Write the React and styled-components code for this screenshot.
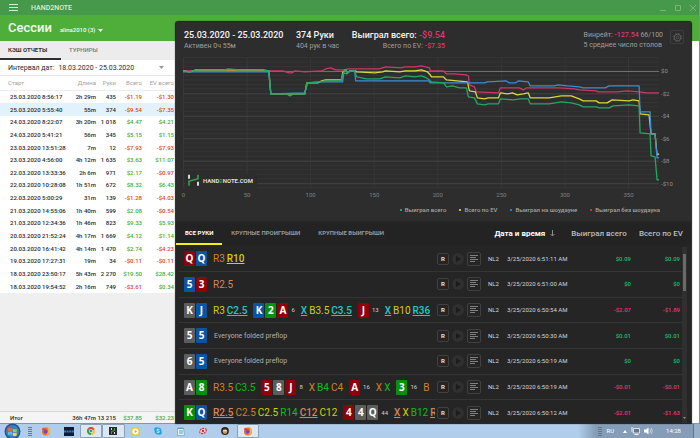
import React, { useState } from 'react';
import styled, { createGlobalStyle, css } from 'styled-components';

const GlobalStyle = createGlobalStyle`
  * {
    box-sizing: border-box;
  }

  body {
    margin: 0;
    font-family: Roboto, 'Noto Sans', sans-serif;
    font-size: 6px;
    line-height: 8px;
    color: #2b2b2b;
  }

  button,
  select {
    margin: 0;
    padding: 0;
    border: none;
    background: none;
    color: inherit;
    font: inherit;
    white-space: nowrap;
  }

  h1,
  p {
    margin: 0;
  }
`;

const Desktop = styled.div`
  display: flex;
  flex-direction: column;
  height: 100vh;
  overflow: hidden;
`;

const AppWindow = styled.main`
  position: relative;
  flex: 1;
  min-height: 0;
  display: flex;
  flex-direction: column;
  background: #ffffff;
  border-right: 1px solid #8c8c8c;
`;

const TitleBar = styled.header`
  display: flex;
  align-items: center;
  height: 15px;
  padding: 0 2px 0 9px;
  gap: 12px;
  background: #46994b;
  color: #d9efd6;
  font-size: 7px;
  font-weight: 500;
`;

const IconButton = styled.button`
  display: flex;
  align-items: center;
  justify-content: center;
`;

const WindowButtons = styled.div`
  display: flex;
  gap: 7px;
  margin-left: auto;
  color: #79b577;
`;

const PageHeader = styled.div`
  display: flex;
  align-items: center;
  gap: 8px;
  height: 26px;
  padding-left: 8px;
  background: #4fae39;
  color: #f2fbef;
`;

const PageTitle = styled.h1`
  font-size: 13px;
  line-height: 16px;
  font-weight: 500;
`;

const PlayerButton = styled.button`
  display: flex;
  align-items: center;
  gap: 3px;
  padding-top: 4px;
  font-weight: 500;
`;

const Sidebar = styled.section`
  flex: 1;
  min-height: 0;
  display: flex;
  flex-direction: column;
  width: 175px;
  background: #efefef;
`;

const ReportTabs = styled.nav`
  display: flex;
  flex: none;
  height: 19px;
  background: #ececec;
`;

const ReportTab = styled.button`
  width: 61px;
  padding-left: 8px;
  border-bottom: 2px solid ${props => (props.$active ? '#2e2e33' : 'transparent')};
  color: ${props => (props.$active ? '#333333' : '#7b7b7b')};
  font-weight: ${props => (props.$active ? 700 : 500)};
  text-align: left;
`;

const RangeRow = styled.div`
  display: flex;
  align-items: center;
  flex: none;
  height: 16px;
  padding: 0 11px 0 8px;
  gap: 4px;
  background: #ffffff;
  border-bottom: 1px solid #e6e6e6;
`;

const RangeLabel = styled.label`
  font-size: 7px;
  line-height: 10px;
  white-space: nowrap;
`;

const RangeSelect = styled.select`
  flex: 1;
  appearance: none;
  font-size: 7px;
  line-height: 10px;
`;

const SessionTable = styled.table`
  flex: none;
  width: 100%;
  height: 217px;
  table-layout: fixed;
  border-collapse: collapse;
  background: #ffffff;

  th {
    height: 14px;
    padding: 0;
    border-bottom: 1px solid #ececec;
    color: #a2a2a2;
    font-weight: 400;
    text-align: right;
    white-space: nowrap;
  }

  th:first-child {
    padding-left: 8px;
    text-align: left;
  }

  th:last-child,
  td:last-child {
    padding-right: 1px;
  }
`;

const TotalTable = styled(SessionTable)`
  height: 12px;
  margin-top: auto;
  background: #f4f4f4;
  border-top: 1px solid #d8d8d8;
`;

const SessionBody = styled.tbody`
  td {
    padding: 0;
    text-align: right;
    font-weight: 500;
    white-space: nowrap;
  }

  td:first-child {
    padding-left: 10px;
    text-align: left;
  }
`;

const SessionRow = styled.tr`
  background: ${props => (props.$selected ? '#e2f2fc' : 'transparent')};
`;

const MoneyCell = styled.td`
  color: ${props => (props.$value.startsWith('-') ? '#d9481f' : '#45ad3d')};
`;

const Report = styled.section`
  position: absolute;
  top: 22px;
  right: 8px;
  bottom: 0;
  left: 176px;
  display: flex;
  flex-direction: column;
  overflow: hidden;
  border-radius: 2px 2px 0 0;
  background: #2d2d2d;
  color: #f4f4f4;
  box-shadow: 0 0 1px 1px #1c1c1c;
`;

const ReportHeader = styled.header`
  display: flex;
  align-items: flex-start;
  flex: none;
  height: 32px;
  padding: 8px 7px 0 8px;
`;

const Stat = styled.div`
  display: flex;
  flex-direction: column;
  flex: none;
  width: ${props => props.$width || 'auto'};
  align-items: ${props => (props.$right ? 'flex-end' : 'flex-start')};
  margin-left: ${props => (props.$push ? 'auto' : '0')};
  white-space: nowrap;
`;

const StatValue = styled.p`
  font-size: 9px;
  line-height: 11px;
  font-weight: 500;
`;

const StatNote = styled.p`
  color: #9f9f9f;
  font-size: 7px;
  line-height: 10px;
`;

const Loss = styled.span`
  color: #d93a6b;
  font-weight: 500;
`;

const SettingsButton = styled(IconButton)`
  width: 14px;
  height: 14px;
  margin-left: 7px;
  border: 1px solid #3d3d3d;
  border-radius: 2px;
  color: #5c5c5c;
`;

const Chart = styled.svg`
  display: block;
  flex: none;
  width: 100%;
  font-size: 6px;
`;

const Legend = styled.ul`
  display: flex;
  justify-content: flex-end;
  flex: none;
  gap: 13px;
  height: 21px;
  margin: 0;
  padding: 5px 31px 0 0;
  list-style: none;
  color: #a3a3a3;
  font-weight: 500;
`;

const LegendItem = styled.li`
  display: flex;
  align-items: center;
  height: 10px;
  gap: 3px;
  white-space: nowrap;

  &::before {
    content: '';
    width: 2px;
    height: 2px;
    border-radius: 1px;
    background: ${props => props.$color};
  }
`;

const HandsBar = styled.div`
  display: flex;
  flex: none;
  height: 24px;
  padding-right: 8px;
  background: #232323;
  border-top: 2px solid #262626;
`;

const HandsTab = styled.button`
  padding: 0 9px;
  border-bottom: 2px solid ${props => (props.$active ? '#eef01a' : 'transparent')};
  color: ${props => (props.$active ? '#ffffff' : '#969696')};
  font-weight: 700;
`;

const SortButtons = styled.div`
  display: flex;
  gap: 12px;
  margin-left: auto;
`;

const SortButton = styled.button`
  display: flex;
  align-items: center;
  gap: 5px;
  margin-right: ${props => (props.$active ? '4px' : '0')};
  color: ${props => (props.$active ? '#ffffff' : '#bdbdbd')};
  font-size: 8px;
  font-weight: ${props => (props.$active ? 700 : 500)};
`;

const HandsList = styled.div`
  display: flex;
  flex: 1;
  min-height: 0;
  overflow: hidden;
  padding: 2px 4px 0 3px;
  background: #252525;
`;

const HandTable = styled.table`
  flex: 1;
  width: 100%;
  height: 178px;
  table-layout: fixed;
  border-collapse: collapse;

  td {
    padding: 0;
    border-bottom: 1px solid #353535;
    color: #d6d6d6;
    white-space: nowrap;
  }

  tr:last-child td {
    border-bottom: none;
  }
`;

const Line = styled.div`
  display: flex;
  align-items: center;
  gap: 6px;
  margin-right: 1px;
  padding-left: 5px;
  overflow: hidden;
`;

const Group = styled.div`
  display: flex;
  align-items: center;
  flex: none;
  gap: ${props => (props.$wide ? '2px' : '1px')};
`;

const suitColors = {
  s: '#5d5d5d',
  h: '#900009',
  d: '#0a54a3',
  c: '#07900f',
};

const Card = styled.span`
  width: 11px;
  height: 15px;
  border-radius: 1px;
  background: ${props => suitColors[props.$suit]};
  color: #ffffff;
  font-family: 'Noto Sans', sans-serif;
  font-size: 10px;
  line-height: 15px;
  font-weight: 700;
  text-align: center;
`;

const Pot = styled.span`
  padding-left: 2px;
  color: #d0d0d0;
`;

const actionColors = {
  o: '#cf8127',
  s: '#d5845c',
  y: '#d2d200',
  c: '#19cbcb',
  g: '#10bd17',
};

const Action = styled.span`
  color: ${props => actionColors[props.$tone]};
  font-size: 10px;
  line-height: 13px;
  ${props =>
    props.$hero &&
    css`
      font-weight: 500;
      text-decoration: underline;
    `}
`;

const Folded = styled.span`
  padding-left: 1px;
  color: #b0b0b0;
  font-size: 7px;
`;

const Tools = styled.div`
  display: flex;
  align-items: center;
  gap: 3px;
  padding-left: 1px;
`;

const ToolButton = styled(IconButton)`
  width: ${props => (props.$large ? '14px' : '12px')};
  height: ${props => (props.$large ? '14px' : '12px')};
  border: 1px solid #404040;
  border-radius: 2px;
  color: #e0e0e0;
  font-weight: 700;
`;

const PlayButton = styled(ToolButton)`
  border: none;
  border-radius: 50%;
  background: #303030;
  color: #1c1c1c;
`;

const ResultCell = styled.td`
  && {
    color: ${props => (props.$value.startsWith('-') ? '#e0386f' : '#12bf72')};
    font-weight: 500;
    text-align: right;
  }

  &:last-child {
    padding-right: 2px;
  }
`;

const Scrollbar = styled.div`
  display: flex;
  flex: none;
  flex-direction: column;
  align-items: center;
  justify-content: space-between;
  width: 5px;
  padding: 4px 0;
  background: #303030;
`;

const Thumb = styled.div`
  width: 3px;
  height: 37px;
  margin-top: 3px;
  background: #6a6a6a;
`;

const Taskbar = styled.footer`
  display: flex;
  align-items: center;
  flex: none;
  height: 15px;
  background: linear-gradient(90deg, #b0cdeb 0 578px, #859db6 596px);
  border-top: 1px solid #7f96ad;
`;

const StartButton = styled(IconButton)`
  width: 17px;
  height: 15px;
  margin-left: 4px;
`;

const Grip = styled.div`
  width: 4px;
  height: 9px;
  margin: 0 ${props => (props.$tray ? '4px' : '3px')} 0 7px;
  background: repeating-linear-gradient(180deg, #5f7892 0 1px, transparent 1px 2px);
`;

const TaskButtons = styled.div`
  display: flex;
  width: 224px;
  height: 14px;
`;

const TaskButton = styled(IconButton)`
  flex: 1;
  border: 1px solid ${props => (props.$open ? '#8ba2ba' : 'transparent')};
  border-radius: 1px;
  background: ${props => (props.$open ? '#dbe7f3' : 'none')};
`;

const Tray = styled.div`
  display: flex;
  align-items: center;
  margin-left: auto;
  color: #ffffff;
`;

const TrayIcons = styled.div`
  display: flex;
  align-items: center;
  gap: 4px;
  margin: 0 13px 0 9px;
`;

const ShowDesktop = styled.button`
  width: 7px;
  height: 14px;
  margin-left: 12px;
  border-left: 1px solid #5d7690;
  background: #98b0c8;
`;

const sessions = [
  ['25.03.2020 8:56:17', '2h 29m', '435', '-$1.19', '-$1.30'],
  ['25.03.2020 5:55:40', '55m', '374', '-$9.54', '-$7.35'],
  ['24.03.2020 8:22:07', '3h 20m', '1 018', '$4.47', '$4.21'],
  ['24.03.2020 5:41:21', '56m', '345', '$5.15', '$1.15'],
  ['23.03.2020 13:51:28', '7m', '12', '-$7.93', '-$7.93'],
  ['23.03.2020 4:56:00', '4h 12m', '1 635', '$3.63', '$11.07'],
  ['22.03.2020 13:33:36', '2h 6m', '971', '$2.17', '-$0.97'],
  ['22.03.2020 10:28:08', '1h 51m', '672', '$8.32', '$6.43'],
  ['22.03.2020 5:00:29', '31m', '139', '-$1.28', '-$4.03'],
  ['21.03.2020 14:55:06', '1h 40m', '599', '$2.08', '-$0.54'],
  ['21.03.2020 12:34:36', '1h 46m', '823', '$9.33', '$5.93'],
  ['20.03.2020 21:52:24', '4h 17m', '1 669', '$4.12', '$1.14'],
  ['20.03.2020 16:41:42', '4h 14m', '1 470', '$2.74', '-$4.23'],
  ['19.03.2020 17:27:31', '19m', '34', '-$0.11', '-$0.11'],
  ['18.03.2020 23:50:17', '5h 43m', '2 270', '$19.50', '$28.42'],
  ['18.03.2020 19:54:52', '2h 16m', '749', '-$3.61', '$0.34'],
];

// Cards are rank + suit, actions are tone:text, a trailing ! marks the hero
const hands = [
  { cards: 'Qh Qd', line: [{ actions: 'o:R3 y:R10!' }], time: '3/25/2020 6:51:11 AM', won: '$0.09', ev: '$0.09' },
  { cards: '5d 3h', line: [{ actions: 's:R2.5' }], time: '3/25/2020 6:51:00 AM', won: '$0', ev: '$0' },
  {
    cards: 'Ks Jd',
    line: [
      { actions: 'y:R3 c:C2.5!' },
      { board: 'Kd 2c Ah', pot: 6, actions: 'c:X! y:B3.5 c:C3.5!' },
      { board: 'Jh', pot: 13, actions: 'c:X! y:B10 c:R36!' },
    ],
    time: '3/25/2020 6:50:54 AM',
    won: '-$2.07',
    ev: '-$1.89',
  },
  { cards: '5s 5d', time: '3/25/2020 6:50:30 AM', won: '$0.01', ev: '$0.01' },
  { cards: '6s 5d', time: '3/25/2020 6:50:19 AM', won: '$0', ev: '$0' },
  {
    cards: 'As 8c',
    line: [
      { actions: 'o:R3.5 g:C3.5' },
      { board: '5h 8s Jh', pot: 8, actions: 'o:X g:B4 o:C4' },
      { board: 'Ah', pot: 16, actions: 'o:X g:X' },
      { board: '3c', pot: 16, actions: 'o:B' },
    ],
    time: '3/25/2020 6:50:19 AM',
    won: '-$0.01',
    ev: '-$0.01',
  },
  {
    cards: 'Kc Qd',
    line: [
      { actions: 's:R2.5! o:C2.5 y:C2.5 g:R14 s:C12! y:C12' },
      { board: '4h 4s Qs', pot: 44, actions: 's:X! y:X g:B12 s:R!' },
    ],
    time: '3/25/2020 6:50:12 AM',
    won: '-$2.01',
    ev: '-$1.63',
  },
];

const series = [
  {
    color: '#c9396a',
    points:
      '183,71 283,71 289,73 292,73 295,71 305,72 322,71 326,69 331,68 336,70 343,70 350,69 356,69 380,69 386,67 402,68 405,67 415,67 422,66 426,67 430,68 431,71 444,71 447,74 455,74 467,75 469,76 470,85 475,87 477,92 499,93 501,88 520,88 524,90 527,88 560,88 575,89 580,90 597,91 599,92 618,92 628,91 640,92 648,93 660,93',
  },
  {
    color: '#d9d640',
    points:
      '183,71 190,72 196,70 225,70 262,70 269,71 271,94 305,94 307,83 318,83 322,81 326,80 342,80 343,72 346,70 348,73 350,71 356,71 357,72 375,73 383,72 386,71 400,72 406,71 415,71 422,70 428,72 430,74 432,77 444,77 447,80 468,82 470,91 476,92 478,98 485,99 489,98 499,98 501,93 508,94 513,93 518,95 524,94 529,93 531,98 550,98 562,96 572,96 580,99 584,101 597,101 600,103 608,103 613,100 630,101 634,100 640,101 641,114 650,115 652,134 656,134 658,155 660,154',
  },
  {
    color: '#3b8dd6',
    points:
      '183,72 269,72 271,94 305,93 308,83 320,82 343,82 344,73 347,74 348,72 355,71 356,81 429,81 431,83 485,83 488,82 507,81 510,83 516,83 519,81 529,82 531,86 555,86 559,85 568,86 580,87 584,88 606,88 610,86 640,86 641,112 651,112 652,134 656,134 658,158 660,158',
  },
  {
    color: '#22a866',
    points:
      '183,71 190,72 196,70 200,70 225,70 228,69 240,70 262,70 269,71 271,94 287,94 290,96 294,94 305,94 307,83 320,82 325,81 341,81 344,72 346,70 348,73 350,71 355,71 357,77 367,79 380,79 386,77 400,78 406,76 415,77 422,76 427,78 430,80 432,82 444,83 447,87 453,86 460,88 467,88 469,97 475,98 478,104 485,105 489,104 499,104 501,99 514,100 521,99 529,99 531,104 550,104 562,102 572,103 580,105 584,107 597,107 600,108 610,108 614,106 630,105 640,106 641,133 651,134 652,156 656,157 658,180 660,180',
  },
];

const legend = [
  ['Выиграл всего', '#12d183'],
  ['Всего по EV', '#eef03a'],
  ['Выиграл на шоудауне', '#2f97ee'],
  ['Выиграл без шоудауна', '#e63872'],
];

const Caret = ({ color = 'currentColor' }) => (
  <svg width="5" height="3" viewBox="0 0 5 3">
    <path d="M0 0h5L2.5 3z" fill={color} />
  </svg>
);

const SessionColumns = () => (
  <colgroup>
    <col width="70" />
    <col width="26" />
    <col width="20" />
    <col width="26" />
    <col />
  </colgroup>
);

const SessionsPanel = () => {
  const [selected, setSelected] = useState(1);

  return (
    <Sidebar>
      <ReportTabs>
        <ReportTab $active>КЭШ ОТЧЕТЫ</ReportTab>
        <ReportTab>ТУРНИРЫ</ReportTab>
      </ReportTabs>
      <RangeRow>
        <RangeLabel htmlFor="range">Интервал дат:</RangeLabel>
        <RangeSelect id="range">
          <option>18.03.2020 - 25.03.2020</option>
        </RangeSelect>
        <Caret color="#999999" />
      </RangeRow>
      <SessionTable>
        <SessionColumns />
        <thead>
          <tr>
            <th>Старт</th>
            <th>Длина</th>
            <th>Руки</th>
            <th>Всего</th>
            <th>EV всего</th>
          </tr>
        </thead>
        <SessionBody>
          {sessions.map(([start, length, count, total, ev], index) => (
            <SessionRow key={start} $selected={index === selected} onClick={() => setSelected(index)}>
              <td>{start}</td>
              <td>{length}</td>
              <td>{count}</td>
              <MoneyCell $value={total}>{total}</MoneyCell>
              <MoneyCell $value={ev}>{ev}</MoneyCell>
            </SessionRow>
          ))}
        </SessionBody>
      </SessionTable>
      <TotalTable>
        <SessionColumns />
        <SessionBody>
          <tr>
            <td>Итог</td>
            <td>36h 47m</td>
            <td>13 215</td>
            <MoneyCell $value="$37.85">$37.85</MoneyCell>
            <MoneyCell $value="$32.23">$32.23</MoneyCell>
          </tr>
        </SessionBody>
      </TotalTable>
    </Sidebar>
  );
};

const ResultsChart = () => (
  <Chart viewBox="176 54 516 146" role="img" aria-label="Выиграл всего">
    {Array.from({ length: 30 }, (_, i) => (
      <path key={i} d={`M183 ${57.5 + i * 4.5}H660`} stroke="#353535" />
    ))}
    {[0, 50, 100, 150, 200, 250, 300, 350].map(x => (
      <g key={x}>
        <path d={`M${183.5 + x * 1.274} 57V188`} stroke="#373737" />
        <text x={183.5 + x * 1.274} y="197" fill="#808080" textAnchor="middle">
          {x}
        </text>
      </g>
    ))}
    {[0, 2, 4, 6, 8, 10].map(y => (
      <g key={y}>
        <path d={`M183 ${71.5 + y * 11.25}H660`} stroke={y ? '#404040' : '#717171'} />
        <text x="662" y={73.5 + y * 11.25} fill="#929292">
          {y ? `-$${y}` : '$0'}
        </text>
      </g>
    ))}
    {series.map(({ color, points }) => (
      <polyline key={color} points={points} fill="none" stroke={color} strokeWidth="1.3" strokeLinejoin="round" />
    ))}
    <path d="M185 174h72v14h-72z" fill="#2d2d2d" />
    <path d="M189 175v4M198 182v4" stroke="#d8d8d8" strokeWidth="2" />
    <path d="M189 186v-4.500l9-2.500v-4" fill="none" stroke="#35a347" strokeWidth="1.6" />
    <text x="203" y="183" fill="#dddddd" fontWeight="700">
      HAND<tspan fill="#35a347">2</tspan>NOTE.COM
    </text>
  </Chart>
);

const Cards = ({ value }) =>
  value.split(' ').map((card, index) => (
    <Card key={index} $suit={card[1]}>
      {card[0]}
    </Card>
  ));

const Actions = ({ value }) => (
  <Group $wide>
    {value.split(' ').map((action, index) => (
      <Action key={index} $tone={action[0]} $hero={action.endsWith('!')}>
        {action.slice(2).replace('!', '')}
      </Action>
    ))}
  </Group>
);

const HandRow = ({ hand }) => (
  <tr>
    <td>
      <Line>
        <Group>
          <Cards value={hand.cards} />
        </Group>
        {hand.line ? (
          hand.line.map((street, index) => (
            <React.Fragment key={index}>
              {street.board && (
                <Group>
                  <Cards value={street.board} />
                  <Pot>{street.pot}</Pot>
                </Group>
              )}
              <Actions value={street.actions} />
            </React.Fragment>
          ))
        ) : (
          <Folded>Everyone folded preflop</Folded>
        )}
      </Line>
    </td>
    <td>
      <Tools>
        <ToolButton>R</ToolButton>
        <PlayButton aria-label="Play">
          <svg width="5" height="6" viewBox="0 0 5 6">
            <path d="M0 0l5 3-5 3z" fill="currentColor" />
          </svg>
        </PlayButton>
        <ToolButton $large aria-label="Notes">
          <svg width="8" height="8" viewBox="0 0 8 8">
            <path d="M0 .5h8M0 2.500h6M0 4.500h8M0 6.500h5" stroke="#808080" />
          </svg>
        </ToolButton>
      </Tools>
    </td>
    <td>NL2</td>
    <td>{hand.time}</td>
    <ResultCell $value={hand.won}>{hand.won}</ResultCell>
    <ResultCell $value={hand.ev}>{hand.ev}</ResultCell>
  </tr>
);

const SessionReport = () => (
  <Report>
    <ReportHeader>
      <Stat $width="112px">
        <StatValue>25.03.2020 - 25.03.2020</StatValue>
        <StatNote>Активен 0ч 55м</StatNote>
      </Stat>
      <Stat $width="56px">
        <StatValue>374 Руки</StatValue>
        <StatNote>404 рук в час</StatNote>
      </Stat>
      <Stat $right $width="93px">
        <StatValue>
          Выиграл всего: <Loss>-$9.54</Loss>
        </StatValue>
        <StatNote>
          Всего по EV: <Loss>-$7.35</Loss>
        </StatNote>
      </Stat>
      <Stat $push>
        <StatNote>
          Винрейт: <Loss>-127.54</Loss> 66/100
        </StatNote>
        <StatNote>5 среднее число столов</StatNote>
      </Stat>
      <SettingsButton aria-label="Настройки">
        <svg width="9" height="9" viewBox="0 0 9 9" fill="none" stroke="currentColor">
          <circle cx="4.5" cy="4.5" r="3.3" />
          <circle cx="4.5" cy="4.5" r="1.3" strokeWidth=".8" />
          <circle cx="4.5" cy="4.5" r="4" strokeDasharray="1.6 1.54" />
        </svg>
      </SettingsButton>
    </ReportHeader>
    <ResultsChart />
    <Legend>
      {legend.map(([name, color]) => (
        <LegendItem key={name} $color={color}>
          {name}
        </LegendItem>
      ))}
    </Legend>
    <HandsBar>
      <HandsTab $active>ВСЕ РУКИ</HandsTab>
      <HandsTab>КРУПНЫЕ ПРОИГРЫШИ</HandsTab>
      <HandsTab>КРУПНЫЕ ВЫИГРЫШИ</HandsTab>
      <SortButtons>
        <SortButton $active>
          Дата и время
          <svg width="5" height="7" viewBox="0 0 5 7" fill="none" stroke="#8c8c8c">
            <path d="M2.500 0v6M.5 4l2 2 2-2" />
          </svg>
        </SortButton>
        <SortButton>Выиграл всего</SortButton>
        <SortButton>Всего по EV</SortButton>
      </SortButtons>
    </HandsBar>
    <HandsList>
      <HandTable>
        <colgroup>
          <col />
          <col width="52" />
          <col width="19" />
          <col width="62" />
          <col width="62" />
          <col width="51" />
        </colgroup>
        <tbody>
          {hands.map((hand, index) => (
            <HandRow key={index} hand={hand} />
          ))}
        </tbody>
      </HandTable>
      <Scrollbar>
        <Thumb />
        <svg width="3" height="2" viewBox="0 0 3 2">
          <path d="M0 0h3L1.500 2z" fill="#8c8c8c" />
        </svg>
      </Scrollbar>
    </HandsList>
  </Report>
);

const Firefox = () => (
  <svg width="10" height="10" viewBox="0 0 10 10">
    <circle cx="5" cy="5.400" r="4" fill="#f4672f" />
    <path d="M6 .4c2 1 3.400 3 3 5.400C8.600 8 7 9.400 5 9.400c2-2 2.600-5 1-9z" fill="#fbb52c" />
    <circle cx="4.600" cy="5.600" r="1.900" fill="#6b48c4" />
    <path d="M1 3.500L2 1.500l1.500 1.800 1.700.4-1.400 1.100z" fill="#e23a4c" />
  </svg>
);

const taskIcons = [
  { name: 'Firefox', icon: <Firefox /> },
  {
    name: 'Tracker',
    icon: (
      <svg width="10" height="9" viewBox="0 0 10 9">
        <path d="M0 0h10v9H0z" fill="#101a30" />
        <path d="M0 4.500h10" stroke="#2d7fd6" strokeWidth="2" strokeDasharray="2 .6" />
      </svg>
    ),
  },
  {
    name: 'Chrome',
    open: true,
    icon: (
      <svg width="8" height="8" viewBox="0 0 8 8">
        <circle cx="4" cy="4" r="4" fill="#f6c32c" />
        <path d="M4 4L.5 2A4 4 0 0 1 7.500 2z" fill="#dd4638" />
        <path d="M4 4L.5 2A4 4 0 0 0 4 8z" fill="#2f9e4f" />
        <path d="M4 2h3.500L4 4z" fill="#dd4638" />
        <circle cx="4" cy="4" r="1.900" fill="#ffffff" />
        <circle cx="4" cy="4" r="1.400" fill="#3f7fe8" />
      </svg>
    ),
  },
  {
    name: 'Hand2Note',
    open: true,
    icon: (
      <svg width="8" height="8" viewBox="0 0 8 8">
        <path d="M0 0h8v8H0z" fill="#2b2b2b" />
        <path d="M2.500 1v2M5.500 5v2" stroke="#dddddd" />
        <path d="M2.500 7V4.500l3-1V1" stroke="#38a84a" fill="none" />
      </svg>
    ),
  },
  {
    name: 'Player',
    icon: (
      <svg width="9" height="9" viewBox="0 0 9 9">
        <rect width="9" height="9" rx="1" fill="#f2c928" />
        <circle cx="4.500" cy="4.500" r="3" fill="#ffffff" />
        <path d="M3.700 3l2.400 1.500L3.700 6z" fill="#e0a31b" />
      </svg>
    ),
  },
  {
    name: 'Skype',
    icon: (
      <svg width="8" height="8" viewBox="0 0 8 8">
        <circle cx="4" cy="4" r="3.400" fill="#1fa2e6" />
        <circle cx="2.200" cy="2.200" r="2" fill="#1fa2e6" />
        <circle cx="5.800" cy="5.800" r="2" fill="#1fa2e6" />
        <path
          d="M5.500 2.700C4.500 1.800 2.700 2.200 2.800 3.100c.1 1 2.600.6 2.600 1.700 0 1-2 1.300-2.900.3"
          fill="none"
          stroke="#ffffff"
          strokeWidth=".8"
        />
      </svg>
    ),
  },
  {
    name: 'Notepad',
    icon: (
      <svg width="8" height="9" viewBox="0 0 8 9">
        <path d="M.5 1h6l1 7.500h-7z" fill="#e9f4fa" stroke="#5d93b5" strokeWidth=".6" />
        <path d="M1 1.500h5.500M2 4h4M2 6h4" stroke="#4f9cc6" />
      </svg>
    ),
  },
  {
    name: 'Poker',
    icon: (
      <svg width="8" height="8" viewBox="0 0 8 8">
        <ellipse
          cx="4"
          cy="4"
          rx="3.400"
          ry="2.400"
          fill="#f4d8dc"
          stroke="#d43343"
          strokeWidth="1.200"
          strokeDasharray="2 .7"
          transform="rotate(-25 4 4)"
        />
        <circle cx="4" cy="4" r="1.200" fill="#d43343" />
      </svg>
    ),
  },
  {
    name: 'Notes',
    icon: (
      <svg width="8" height="8" viewBox="0 0 8 8">
        <circle cx="4" cy="4" r="3.900" fill="#33261e" />
        <circle cx="4" cy="4.600" r="2.300" fill="#c39a62" />
        <circle cx="3" cy="3.700" r=".8" fill="#ffffff" />
        <circle cx="5" cy="3.700" r=".8" fill="#ffffff" />
      </svg>
    ),
  },
  { name: 'Firefox 2', open: true, icon: <Firefox /> },
];

const WindowsTaskbar = () => (
  <Taskbar>
    <StartButton aria-label="Start">
      <svg width="17" height="17" viewBox="0 0 17 17">
        <circle cx="8.500" cy="8.500" r="8" fill="#24588c" />
        <circle cx="8.500" cy="8.500" r="6.500" fill="#3c82b8" />
        <path d="M4 5.500c1.500-1 2.500-1 4 0v3c-1.500-1-2.500-1-4 0z" fill="#ec6a35" />
        <path d="M8.700 5.700c1.500.8 2.500.8 4 0v3c-1.500.8-2.500.8-4 0z" fill="#9ccb4a" />
        <path d="M4 9.200c1.500-1 2.500-1 4 0v3c-1.500-1-2.500-1-4 0z" fill="#62b8ea" />
        <path d="M8.700 9.400c1.500.8 2.500.8 4 0v3c-1.500.8-2.500.8-4 0z" fill="#f8cf45" />
      </svg>
    </StartButton>
    <Grip />
    <TaskButtons>
      {taskIcons.map(({ name, open, icon }) => (
        <TaskButton key={name} $open={open} aria-label={name}>
          {icon}
        </TaskButton>
      ))}
    </TaskButtons>
    <Tray>
      <Grip $tray />
      <span>RU</span>
      <TrayIcons>
        <svg width="4" height="3" viewBox="0 0 4 3">
          <path d="M0 3h4L2 0z" fill="#ffffff" />
        </svg>
        <svg width="9" height="8" viewBox="0 0 9 8">
          <path d="M2.500 1.500h6v4.500h-6z" fill="#64798e" stroke="#f2f2f2" strokeWidth=".8" />
          <path d="M1 0v4.500l1 1M3.500 7.500h4" stroke="#f2f2f2" fill="none" />
        </svg>
        <svg width="9" height="8" viewBox="0 0 9 8">
          <path d="M0 2.500h2L4.500.5v7L2 5.500H0z" fill="#ffffff" />
          <path d="M5.800 2q1.400 2 0 4M7.300 1q2 3 0 6" stroke="#dfe7ee" strokeWidth=".7" fill="none" />
        </svg>
      </TrayIcons>
      <span>14:28</span>
      <ShowDesktop aria-label="Show desktop" />
    </Tray>
  </Taskbar>
);

const App = () => (
  <>
    <GlobalStyle />
    <Desktop>
      <AppWindow>
        <TitleBar>
          <IconButton aria-label="Меню">
            <svg width="10" height="7" viewBox="0 0 10 7">
              <path d="M0 .5h9M0 3.500h9M0 6.500h9" stroke="#d9efd6" />
            </svg>
          </IconButton>
          <span>HAND2NOTE</span>
          <WindowButtons>
            <IconButton aria-label="Свернуть">
              <svg width="8" height="8" viewBox="0 0 8 8" stroke="currentColor">
                <path d="M1 6.500h6" />
              </svg>
            </IconButton>
            <IconButton aria-label="Развернуть">
              <svg width="8" height="8" viewBox="0 0 8 8" stroke="currentColor" fill="none">
                <path d="M1.500 1.500h5v5h-5z" />
              </svg>
            </IconButton>
            <IconButton aria-label="Закрыть">
              <svg width="8" height="8" viewBox="0 0 8 8" stroke="currentColor">
                <path d="M1 1l6 6M7 1L1 7" />
              </svg>
            </IconButton>
          </WindowButtons>
        </TitleBar>
        <PageHeader>
          <PageTitle>Сессии</PageTitle>
          <PlayerButton>
            alina2010 (3)
            <Caret />
          </PlayerButton>
        </PageHeader>
        <SessionsPanel />
        <SessionReport />
      </AppWindow>
      <WindowsTaskbar />
    </Desktop>
  </>
);

export default App;
